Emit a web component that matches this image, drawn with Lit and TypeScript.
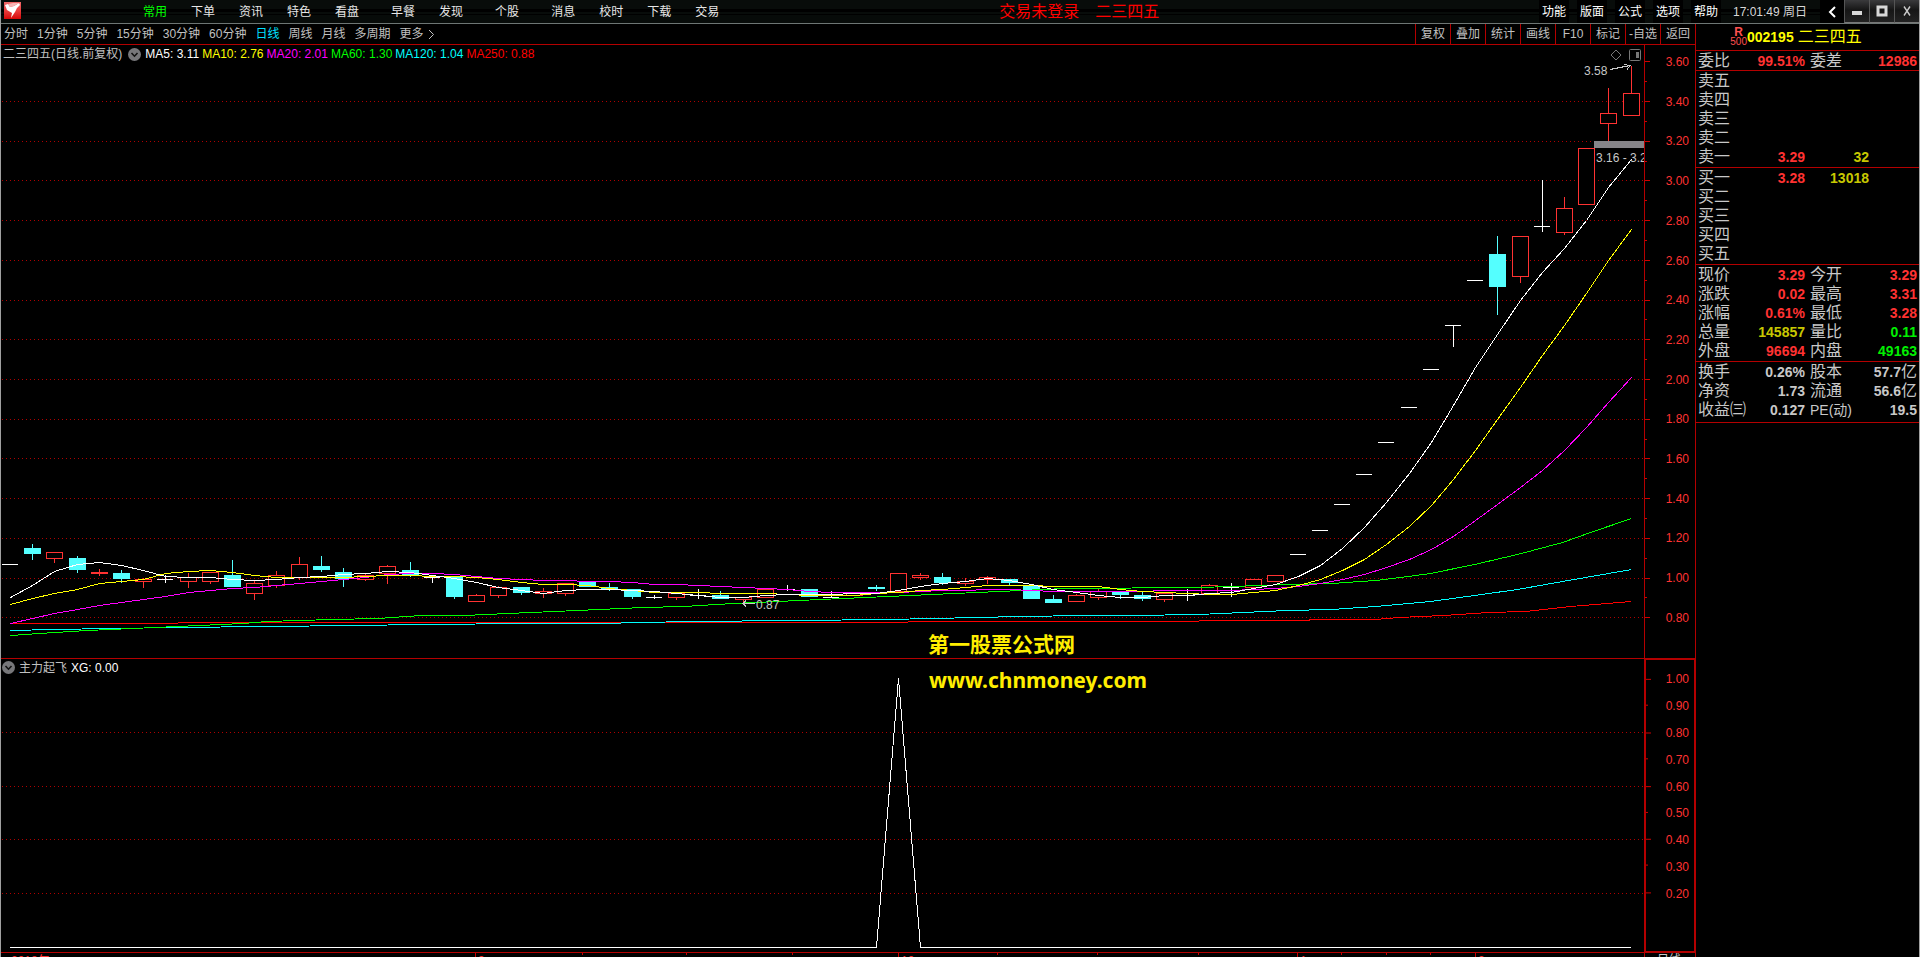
import { LitElement, html, css, svg, nothing } from "lit";
import { customElement } from "lit/decorators.js";

type Kind = "up" | "down" | "flat";
/** kind, body top, body bottom, wick top, wick bottom, in plot units */
type Candle = [Kind, number, number, number, number];

const FIRST_X = 10;
const STEP = 22.2;
const barX = (i: number) => Math.round(FIRST_X + STEP * i);

const up = (a: number, b: number, c = a, d = b): Candle => ["up", a, b, c, d];
const down = (a: number, b: number, c = a, d = b): Candle => ["down", a, b, c, d];
const flat = (a: number, c = a, d = a): Candle => ["flat", a, a, c, d];

const CANDLES: Candle[] = [
  flat(564), down(548, 554, 544, 560), up(552, 558, 552, 562), down(558, 570, 556, 573),
  up(572, 573, 569, 575), down(573, 579, 570, 583), up(579, 581, 578, 587), flat(579, 575, 583),
  up(577, 581, 573, 587), up(572, 581, 572, 583), down(575, 587, 560, 587), up(583, 593, 580, 599),
  up(575, 585, 571, 587), up(564, 577, 557, 579), down(566, 570, 556, 572), down(572, 579, 568, 587),
  up(575, 579, 574, 580), up(566, 573, 565, 583), down(570, 576, 562, 577), flat(577, 576, 583),
  down(577, 597, 577, 599), up(595, 601, 594, 601), up(587, 595, 586, 597), down(587, 593, 587, 595),
  up(591, 593, 588, 597), up(583, 593, 583, 595), down(581, 587), down(587, 590, 583, 591),
  down(589, 597, 589, 599), flat(597, 595, 599), up(593, 597, 593, 599), flat(595, 589, 599),
  down(595, 599, 591, 599), up(597, 599, 597, 602), up(589, 597), flat(589, 585, 591),
  down(589, 597), flat(597, 591, 597), up(593, 595), down(587, 589, 585, 591),
  up(573, 591), up(575, 577, 573, 579), down(577, 583, 573, 585), up(581, 583, 578, 585),
  up(577, 579, 576, 583), down(579, 583, 579, 585), down(585, 599), down(599, 603, 595, 603),
  up(595, 601, 594, 601), up(591, 597, 589, 599), down(591, 595, 591, 599), down(595, 599, 592, 601),
  up(593, 599, 593, 601), flat(595, 589, 601), up(585, 593, 584, 593), flat(587, 583, 597),
  up(579, 587), up(575, 581), flat(554), flat(530), flat(504), flat(474), flat(442), flat(407),
  flat(369), flat(325, 325, 347), flat(280), down(254, 287, 236, 315), up(236, 276, 236, 282),
  flat(226, 180, 232), up(208, 232, 197, 234), up(148, 204), up(113, 123, 88, 140), up(93, 115, 66, 115),
];

const perBar = (ys: number[]): [number, number][] => ys.map((y, i) => [barX(i), y]);

interface Series { name: string; value: string; color: string; points: [number, number][] }

const AVERAGES: Series[] = [
  { name: "MA250", value: "0.88", color: "#ff0000", points: [
    [10, 623], [177, 623], [178, 622], [905, 622], [910, 621], [1198, 621], [1199, 620], [1308, 620],
    [1310, 619], [1375, 619], [1398, 617], [1443, 615], [1488, 612], [1525, 611], [1570, 606], [1631, 601]] },
  { name: "MA120", value: "1.04", color: "#00ffff", points: [
    [10, 630], [53, 629], [110, 628], [177, 627], [265, 626], [354, 625], [421, 624], [532, 623], [598, 623],
    [688, 621], [797, 620], [886, 619], [933, 618], [976, 617], [1020, 616], [1086, 615], [1131, 615],
    [1198, 614], [1243, 612], [1287, 610], [1331, 609], [1375, 606], [1430, 601], [1474, 595], [1517, 589],
    [1562, 581], [1631, 569]] },
  { name: "MA60", value: "1.30", color: "#00ff00", points: [
    [10, 635], [54, 632], [87, 630], [132, 628], [177, 626], [243, 623], [266, 621], [332, 619], [377, 618],
    [421, 615], [464, 615], [507, 613], [554, 611], [599, 609], [643, 607], [683, 606], [733, 603],
    [777, 601], [820, 599], [865, 597], [910, 595], [954, 593], [999, 591], [1043, 589], [1065, 588],
    [1198, 587], [1231, 586], [1287, 584], [1331, 583], [1375, 580], [1408, 576], [1430, 573],
    [1474, 564], [1517, 554], [1562, 542], [1590, 532], [1631, 518]] },
  { name: "MA20", value: "2.01", color: "#ff00ff", points: perBar([
    623, 618, 613, 609, 605, 602, 599, 596, 592, 590, 588, 587, 585, 583, 581, 579, 577, 574, 573, 573, 574,
    576, 578, 579, 580, 580, 581, 581, 582, 584, 584, 585, 586, 587, 588, 589, 591, 592, 592, 592, 592, 591,
    590, 590, 589, 589, 590, 591, 591, 591, 591, 591, 590, 590, 590, 590, 589, 588, 586, 583, 579, 574, 567,
    559, 549, 536, 520, 504, 487, 470, 450, 427, 402, 377]) },
  { name: "MA10", value: "2.76", color: "#ffff00", points: perBar([
    604, 598, 593, 589, 583, 581, 579, 573, 571, 570, 572, 575, 577, 577, 577, 577, 576, 575, 575, 576, 576,
    577, 579, 582, 584, 584, 585, 588, 590, 592, 592, 592, 593, 593, 593, 594, 595, 595, 595, 593, 592, 590,
    589, 587, 585, 585, 585, 586, 586, 586, 589, 591, 592, 593, 594, 594, 592, 590, 585, 579, 570, 559, 544,
    526, 505, 479, 450, 419, 387, 355, 325, 293, 260, 229]) },
  { name: "MA5", value: "3.11", color: "#ffffff", points: perBar([
    597, 585, 571, 564, 562, 565, 570, 576, 577, 577, 579, 580, 579, 577, 576, 574, 573, 571, 572, 575, 578,
    582, 587, 590, 593, 590, 589, 589, 590, 591, 593, 595, 597, 597, 595, 594, 594, 594, 593, 593, 590, 586,
    583, 581, 578, 580, 584, 589, 592, 595, 597, 597, 595, 595, 593, 592, 588, 584, 576, 565, 548, 527, 502,
    473, 442, 405, 367, 334, 300, 272, 248, 220, 187, 159]) },
];

const base = css`
  :host { display: block; box-sizing: border-box; }
  *, *::before, *::after { box-sizing: border-box; }
  button {
    appearance: none; border: 0; margin: 0; padding: 0; background: none;
    color: inherit; font: inherit; line-height: inherit; white-space: nowrap; cursor: pointer;
  }
  svg { display: block; }
`;

const badge = svg`
  <circle cx="6.5" cy="6.5" r="6.5" fill="#77777a"></circle>
  <path d="M3.5 5 L6.5 8.2 L9.5 5" fill="none" stroke="#111" stroke-width="1.6"></path>`;

@customElement("title-bar")
class TitleBar extends LitElement {
  static styles = [base, css`
    .bar {
      display: flex; align-items: stretch; height: 24px; padding-left: 3px;
      border-bottom: 1px solid #6e7674; color: #e6e6e6;
      background: linear-gradient(#080c0a 0 9px, #000 9px 12px, #080c0a 12px 14px, #000 14px 15px, #070b09 15px);
    }
    .logo { margin: 2px 0 0; }
    nav { display: flex; gap: 32px; margin-left: 122px; }
    .group { display: flex; gap: 24px; }
    .on { color: #00ff00; }
    .notice {
      flex: 1; display: flex; gap: 16px; align-items: center; padding-left: 280px;
      color: #ff0000; font-size: 16px; line-height: 20px; white-space: nowrap; overflow: hidden;
    }
    .menu { display: flex; gap: 8px; color: #fff; }
    .menu button { width: 30px; background: #000; }
    .clock { align-self: center; margin: 0 13px 0 12px; white-space: pre; color: #d8d8d8; }
    .back { width: 24px; background: #000; display: grid; place-items: center; }
    .win {
      width: 25px; display: grid; place-items: center; border-left: 1px solid #555;
      border-bottom: 1px solid #777; background: linear-gradient(#3a3a3c, #161616 45%, #222);
    }
  `];
  groups = [["常用", "下单", "资讯", "特色", "看盘"], ["早餐", "发现"], ["个股"], ["消息", "校时", "下载", "交易"]];
  render() {
    return html`<header class="bar">
      <svg class="logo" width="17" height="17" viewBox="0 0 17 17" aria-hidden="true">
        <defs><linearGradient id="g" x1="0" y1="0" x2="0" y2="1">
          <stop offset="0" stop-color="#f06a6a"></stop><stop offset=".55" stop-color="#e83a3a"></stop>
          <stop offset="1" stop-color="#d80808"></stop></linearGradient></defs>
        <rect width="17" height="17" fill="url(#g)"></rect>
        <path d="M1 3 L4 2 L6 5 L10 4 L15 1 L16 3 L13 6 L11 10 L7 16 L8 11 L3 8 Z" fill="#fff"></path>
        <path d="M4 2 L9 1 L15 1 L10 4 L6 5 Z" fill="#f7b4b4"></path>
      </svg>
      <nav>${this.groups.map((g, gi) => html`<div class="group">
        ${g.map((t, i) => html`<button class=${gi + i === 0 ? "on" : ""}>${t}</button>`)}</div>`)}</nav>
      <div class="notice"><span>交易未登录</span><span>二三四五</span></div>
      <div class="menu">${["功能", "版面", "公式", "选项", "帮助"].map((t) => html`<button>${t}</button>`)}</div>
      <time class="clock">17:01:49 周日</time>
      <button class="back" aria-label="返回">
        <svg width="9" height="12" viewBox="0 0 9 12"><path d="M7 1 L2 6 L7 11" fill="none" stroke="#fff" stroke-width="2"></path></svg>
      </button>
      <button class="win" aria-label="最小化">
        <svg width="12" height="12" viewBox="0 0 12 12"><rect x="1" y="6" width="10" height="4" fill="#d8d8d8"></rect></svg>
      </button>
      <button class="win" aria-label="最大化">
        <svg width="12" height="12" viewBox="0 0 12 12"><rect x="2" y="2" width="8" height="8" fill="none" stroke="#d8d8d8" stroke-width="3"></rect></svg>
      </button>
      <button class="win" aria-label="关闭">
        <svg width="8" height="12" viewBox="0 0 8 12"><path d="M1 1.5 L7 10.5 M7 1.5 L1 10.5" stroke="#c8c8c8" stroke-width="1.4"></path></svg>
      </button>
    </header>`;
  }
}

@customElement("period-bar")
class PeriodBar extends LitElement {
  static styles = [base, css`
    .bar { display: flex; justify-content: space-between; height: 21px; border-bottom: 1px solid #b40000; color: #c0c0c0; }
    .periods { display: flex; gap: 9px; padding-left: 3px; align-items: center; }
    .on { color: #00e0ff; }
    .more { display: flex; gap: 4px; align-items: center; }
    .tools { display: flex; }
    .tools button { width: 35px; border-left: 1px solid #b40000; }
  `];
  render() {
    const periods = ["分时", "1分钟", "5分钟", "15分钟", "30分钟", "60分钟", "日线", "周线", "月线", "多周期"];
    return html`<div class="bar">
      <div class="periods">
        ${periods.map((p) => html`<button class=${p === "日线" ? "on" : ""}>${p}</button>`)}
        <button class="more">更多<svg width="7" height="11" viewBox="0 0 7 11" aria-hidden="true"><path d="M1 1 L5.5 5.5 L1 10" fill="none" stroke="#c0c0c0"></path></svg></button>
      </div>
      <div class="tools">
        ${["复权", "叠加", "统计", "画线", "F10", "标记", "-自选", "返回"].map((t) => html`<button>${t}</button>`)}
      </div>
    </div>`;
  }
}

/** Coordinates of a plot; its drawing stretches to the room it is given. */
class Plot extends LitElement {
  left = 1; top = 0; w = 1643; h = 0;
  ticks: { y: number; major: boolean; grid: boolean }[] = [];
  labels: string[] = [];
  px(x: number) { return `${((x - this.left) / this.w) * 100}%`; }
  py(y: number) { return `${((y - this.top) / this.h) * 100}%`; }
  static plotStyles = css`
    :host { display: grid; grid-template: minmax(0, 1fr) / minmax(0, 1fr) 51px; min-height: 0; border-bottom: 1px solid #b40000; }
    .plot { position: relative; display: grid; grid-template: minmax(0, 1fr) / minmax(0, 1fr); overflow: hidden; }
    .plot > svg, .info { grid-area: 1 / 1; min-height: 0; min-width: 0; }
    .plot > svg { width: 100%; height: 100%; shape-rendering: crispEdges; }
    .plot > svg * { vector-effect: non-scaling-stroke; }
    .info { display: flex; align-items: center; align-self: start; position: relative; height: 18px; white-space: nowrap; color: #c0c0c0; }
    .grid { stroke: #b00000; stroke-dasharray: 1 3; fill: none; }
    .axis { position: relative; display: grid; grid-template: minmax(0, 1fr) / minmax(0, 1fr); border-left: 1px solid #b40000; color: #ff3232; }
    .axis > svg, .scale { grid-area: 1 / 1; min-height: 0; }
    .axis > svg { width: 6px; height: 100%; shape-rendering: crispEdges; }
    .scale { display: flex; flex-direction: column; justify-content: space-between; align-items: flex-end; line-height: 14px; }
    .note { position: absolute; color: #c8c8c8; line-height: 14px; white-space: pre; }
    .mark { position: absolute; color: #ffee00; font-weight: 700; font-size: 21px; line-height: 28px; white-space: nowrap; }
  `;
  gridLines() {
    return this.ticks.filter((t) => t.grid).map((t) =>
      svg`<line class="grid" x1="2" x2=${this.left + this.w} y1=${t.y + 0.5} y2=${t.y + 0.5}></line>`);
  }
  axis() {
    return html`<div class="axis">
      <svg viewBox="0 ${this.top} 6 ${this.h}" preserveAspectRatio="none" aria-hidden="true">
        ${this.ticks.map((t) => svg`<line x1="0" x2=${t.major ? 5 : 2} y1=${t.y + 0.5} y2=${t.y + 0.5} stroke="#d00000"></line>`)}
      </svg>
      <div class="scale">${this.labels.map((l) => html`<span>${l}</span>`)}</div>
    </div>`;
  }
}

@customElement("kline-chart")
class KlineChart extends Plot {
  static styles = [base, Plot.plotStyles, css`
    .info { padding-left: 2px; gap: 3px; }
    .badge { margin: 0 1px 0 3px; }
    .scale { padding: 10px 6px 33px 0; }
    .tools { position: absolute; display: flex; gap: 7px; right: 3px; top: 4px; }
  `];
  constructor() {
    super();
    this.top = 45; this.h = 613;
    for (let k = 0; k <= 28; k++) {
      this.ticks.push({ y: Math.round(61.2 + k * 19.86), major: k % 2 === 0, grid: k % 2 === 0 && k > 0 });
      if (k % 2 === 0) this.labels.push((3.6 - k / 10).toFixed(2));
    }
  }
  candle([kind, a, b, c, d]: Candle, i: number) {
    const x = barX(i);
    if (kind === "down") return svg`
      <rect x=${x} y=${c} width="1" height=${d - c} fill="#54ffff"></rect>
      <rect x=${x - 8} y=${a} width="17" height=${b - a} fill="#54ffff"></rect>`;
    if (kind === "up") return svg`
      <rect x=${x} y=${c} width="1" height=${d - c + 1} fill="#ff3232"></rect>
      <rect x=${x - 7.5} y=${a + 0.5} width="16" height=${b - a} fill="#000" stroke="#ff3232"></rect>`;
    return svg`
      <rect x=${x - 8} y=${a} width="16" height="1" fill="#fff"></rect>
      ${d > c ? svg`<rect x=${x} y=${c} width="1" height=${d - c} fill="#fff"></rect>` : nothing}`;
  }
  render() {
    return html`
      <div class="plot">
        <svg viewBox="${this.left} ${this.top} ${this.w} ${this.h}" preserveAspectRatio="none" role="img" aria-label="日线">
          ${this.gridLines()}
          <rect x="1594" y="141" width="50" height="7" fill="#868488"></rect>
          ${CANDLES.map((c, i) => this.candle(c, i))}
          ${AVERAGES.map((s) => svg`<polyline fill="none" stroke=${s.color}
            points=${s.points.map(([x, y]) => `${x + 0.5},${y + 0.5}`).join(" ")}></polyline>`)}
          <path d="M1610 69.5 L1630 65.5 M1624 64.5 L1630 65.5 L1627 69.5" fill="none" stroke="#c8c8c8"></path>
          <path d="M755 603.5 L743 603.5 M746 600.5 L743 603.5 L746 606.5" fill="none" stroke="#c8c8c8"></path>
        </svg>
        <div class="info">
          <span>二三四五(日线.前复权)</span>
          <svg class="badge" width="13" height="13" viewBox="0 0 13 13" aria-hidden="true">${badge}</svg>
          ${[...AVERAGES].reverse().map((s) => html`<span style="color:${s.color}">${s.name}: ${s.value}</span>`)}
        </div>
        <div class="tools">
          <svg width="12" height="12" viewBox="0 0 12 12" aria-hidden="true"><path d="M6 1 L11 6 L6 11 L1 6 Z" fill="none" stroke="#777"></path></svg>
          <svg width="12" height="12" viewBox="0 0 12 12" aria-hidden="true"><rect x=".5" y=".5" width="11" height="11" rx="1" fill="none" stroke="#777"></rect><rect x="7" y="3" width="3" height="6" fill="#777"></rect></svg>
        </div>
        <span class="note" style="left:${this.px(1584)};top:${this.py(64)}">3.58</span>
        <span class="note" style="left:${this.px(1596)};top:${this.py(151)}">3.16 - 3.20</span>
        <span class="note" style="left:${this.px(756)};top:${this.py(598)}">0.87</span>
        <span class="mark" style="left:${this.px(928)};top:${this.py(631)}">第一股票公式网</span>
      </div>
      ${this.axis()}`;
  }
}

@customElement("signal-chart")
class SignalChart extends Plot {
  static styles = [base, Plot.plotStyles, css`
    .info { padding-left: 1px; gap: 4px; height: 17px; }
    .value { color: #fff; }
    .axis { border: 1px solid #b40000; border-left-width: 2px; }
    .scale { padding: 12px 5px 50px 0; }
    .mark { font-family: "Noto Sans", "Open Sans", sans-serif; }
  `];
  constructor() {
    super();
    this.top = 659; this.h = 293;
    for (let k = 0; k <= 8; k++) {
      this.ticks.push({ y: Math.round(678 + k * 26.9) - (k % 2), major: k % 2 === 0, grid: k % 2 === 0 && k > 0 });
      this.labels.push((1 - k / 10).toFixed(2));
    }
  }
  render() {
    return html`
      <div class="plot">
        <svg viewBox="${this.left} ${this.top} ${this.w} ${this.h}" preserveAspectRatio="none" role="img" aria-label="主力起飞">
          ${this.gridLines()}
          <polyline fill="none" stroke="#fff" points="10,947.5 876.5,947.5 898.5,678.5 920.5,947.5 1631,947.5"></polyline>
        </svg>
        <div class="info">
          <svg width="13" height="13" viewBox="0 0 13 13" aria-hidden="true">${badge}</svg>
          <span>主力起飞</span><span class="value">XG: 0.00</span>
        </div>
        <span class="mark" style="left:${this.px(929)};top:${this.py(666)}">www.chnmoney.com</span>
      </div>
      ${this.axis()}`;
  }
}

@customElement("date-axis")
class DateAxis extends LitElement {
  static styles = [base, css`
    .row { display: grid; grid-template-columns: minmax(0, 1fr) 51px; height: 4px; overflow: hidden; }
    .dates { position: relative; color: #ff3232; }
    .tick { position: absolute; top: 0; width: 1px; height: 2px; background: #c80000; }
    .tick.long { height: 4px; }
    .date { position: absolute; top: 0; line-height: 16px; white-space: nowrap; }
    .period { border-left: 1px solid #b40000; padding-left: 12px; color: #c8c8c8; line-height: 14px; }
  `];
  render() {
    const at = (x: number) => `left:${((x - 1) / 1643) * 100}%`;
    const minor = [582, 686, 792, 997, 1097, 1198, 1341, 1386, 1430];
    const major: [number, string][] = [[475, "9"], [898, "10"], [1297, "1"], [1475, "2"]];
    return html`<div class="row">
      <div class="dates">
        <span class="date" style=${at(11)}>2018年</span>
        ${minor.map((x) => html`<i class="tick" style=${at(x)}></i>`)}
        ${major.map(([x, t]) => html`<i class="tick long" style=${at(x)}></i><span class="date" style=${at(x + 3)}>${t}</span>`)}
      </div>
      <div class="period">日线</div>
    </div>`;
  }
}

type Cell = [label: string, value: string, tone: string];

@customElement("quote-panel")
class QuotePanel extends LitElement {
  static styles = [base, css`
    :host { border-left: 1px solid #b40000; color: #c8c8c8; }
    .head {
      display: flex; justify-content: center; align-items: center; height: 27px;
      padding-right: 23px; border-bottom: 1px solid #b40000; color: #ffff00;
    }
    .flag { display: grid; justify-items: center; color: #ff5050; font-size: 10px; line-height: 10px; }
    .flag b { font-size: 12px; }
    .name { font-size: 16px; line-height: 20px; margin-left: 4px; }
    table { width: 100%; border-collapse: collapse; table-layout: fixed; }
    .part { border-bottom: 1px solid #b40000; }
    .book { padding-bottom: 1px; }
    .base { padding-bottom: 3px; }
    th, td { height: 19px; padding: 0; line-height: 18px; white-space: nowrap; }
    th { width: 50px; padding: 1px 0 0 2px; text-align: left; font-weight: 400; font-size: 16px; }
    th.second { width: 56px; padding-left: 5px; }
    td { text-align: right; font-size: 14px; font-weight: 700; }
    td.price { width: 59px; }
    td:last-child { padding-right: 2px; }
    td.size:last-child { padding-right: 50px; }
    .code { font-size: 14px; }
    .small { font-size: 14px; }
    .unit { font-size: 16px; font-weight: 400; }
    .red { color: #ff3232; }
    .green { color: #00f000; }
    .gold { color: #c8c800; }
  `];
  pairs(rows: [Cell, Cell][], cls: string) {
    const cell = ([label, value, tone]: Cell, second: boolean) => html`
      <th scope="row" class=${second ? "second" : ""}><span class=${label.startsWith("PE") ? "small" : ""}>${label}</span></th>
      <td class="${tone} ${second ? "" : "price"}">${value.endsWith("亿") ? html`${value.slice(0, -1)}<span class="unit">亿</span>` : value}</td>`;
    return html`<div class="part ${cls}"><table>${rows.map(([a, b]) => html`<tr>${cell(a, false)}${cell(b, true)}</tr>`)}</table></div>`;
  }
  book(rows: [string, string?, string?][]) {
    return html`<div class="part book"><table>${rows.map(([l, p, s]) => html`
      <tr><th scope="row">${l}</th><td class="red price">${p}</td><td class="gold size">${s}</td></tr>`)}</table></div>`;
  }
  render() {
    return html`<aside>
      <div class="head">
        <span class="flag"><b>R</b><span>500</span></span><b class="code">002195</b><span class="name">二三四五</span>
      </div>
      ${this.pairs([[["委比", "99.51%", "red"], ["委差", "12986", "red"]]], "")}
      ${this.book([["卖五"], ["卖四"], ["卖三"], ["卖二"], ["卖一", "3.29", "32"]])}
      ${this.book([["买一", "3.28", "13018"], ["买二"], ["买三"], ["买四"], ["买五"]])}
      ${this.pairs([
        [["现价", "3.29", "red"], ["今开", "3.29", "red"]],
        [["涨跌", "0.02", "red"], ["最高", "3.31", "red"]],
        [["涨幅", "0.61%", "red"], ["最低", "3.28", "red"]],
        [["总量", "145857", "gold"], ["量比", "0.11", "green"]],
        [["外盘", "96694", "red"], ["内盘", "49163", "green"]],
      ], "book")}
      ${this.pairs([
        [["换手", "0.26%", ""], ["股本", "57.7亿", ""]],
        [["净资", "1.73", ""], ["流通", "56.6亿", ""]],
        [["收益㈢", "0.127", ""], ["PE(动)", "19.5", ""]],
      ], "base")}
    </aside>`;
  }
}

@customElement("app-root")
class AppRoot extends LitElement {
  static styles = [base, css`
    :host {
      display: grid; grid-template-rows: auto minmax(0, 1fr); height: 100vh; overflow: hidden;
      background: #000; color: #c8c8c8; border: solid #a0a0a0; border-width: 0 1px;
      font: 12px/16px "Liberation Sans", "Noto Sans CJK SC", sans-serif;
    }
    .body { display: grid; grid-template-columns: minmax(0, 1fr) 224px; min-height: 0; }
    .charts { display: grid; grid-template-rows: auto minmax(0, 614fr) minmax(0, 294fr) auto; min-height: 0; }
  `];
  render() {
    return html`
      <title-bar></title-bar>
      <div class="body">
        <main class="charts">
          <period-bar></period-bar>
          <kline-chart></kline-chart>
          <signal-chart></signal-chart>
          <date-axis></date-axis>
        </main>
        <quote-panel></quote-panel>
      </div>`;
  }
}
